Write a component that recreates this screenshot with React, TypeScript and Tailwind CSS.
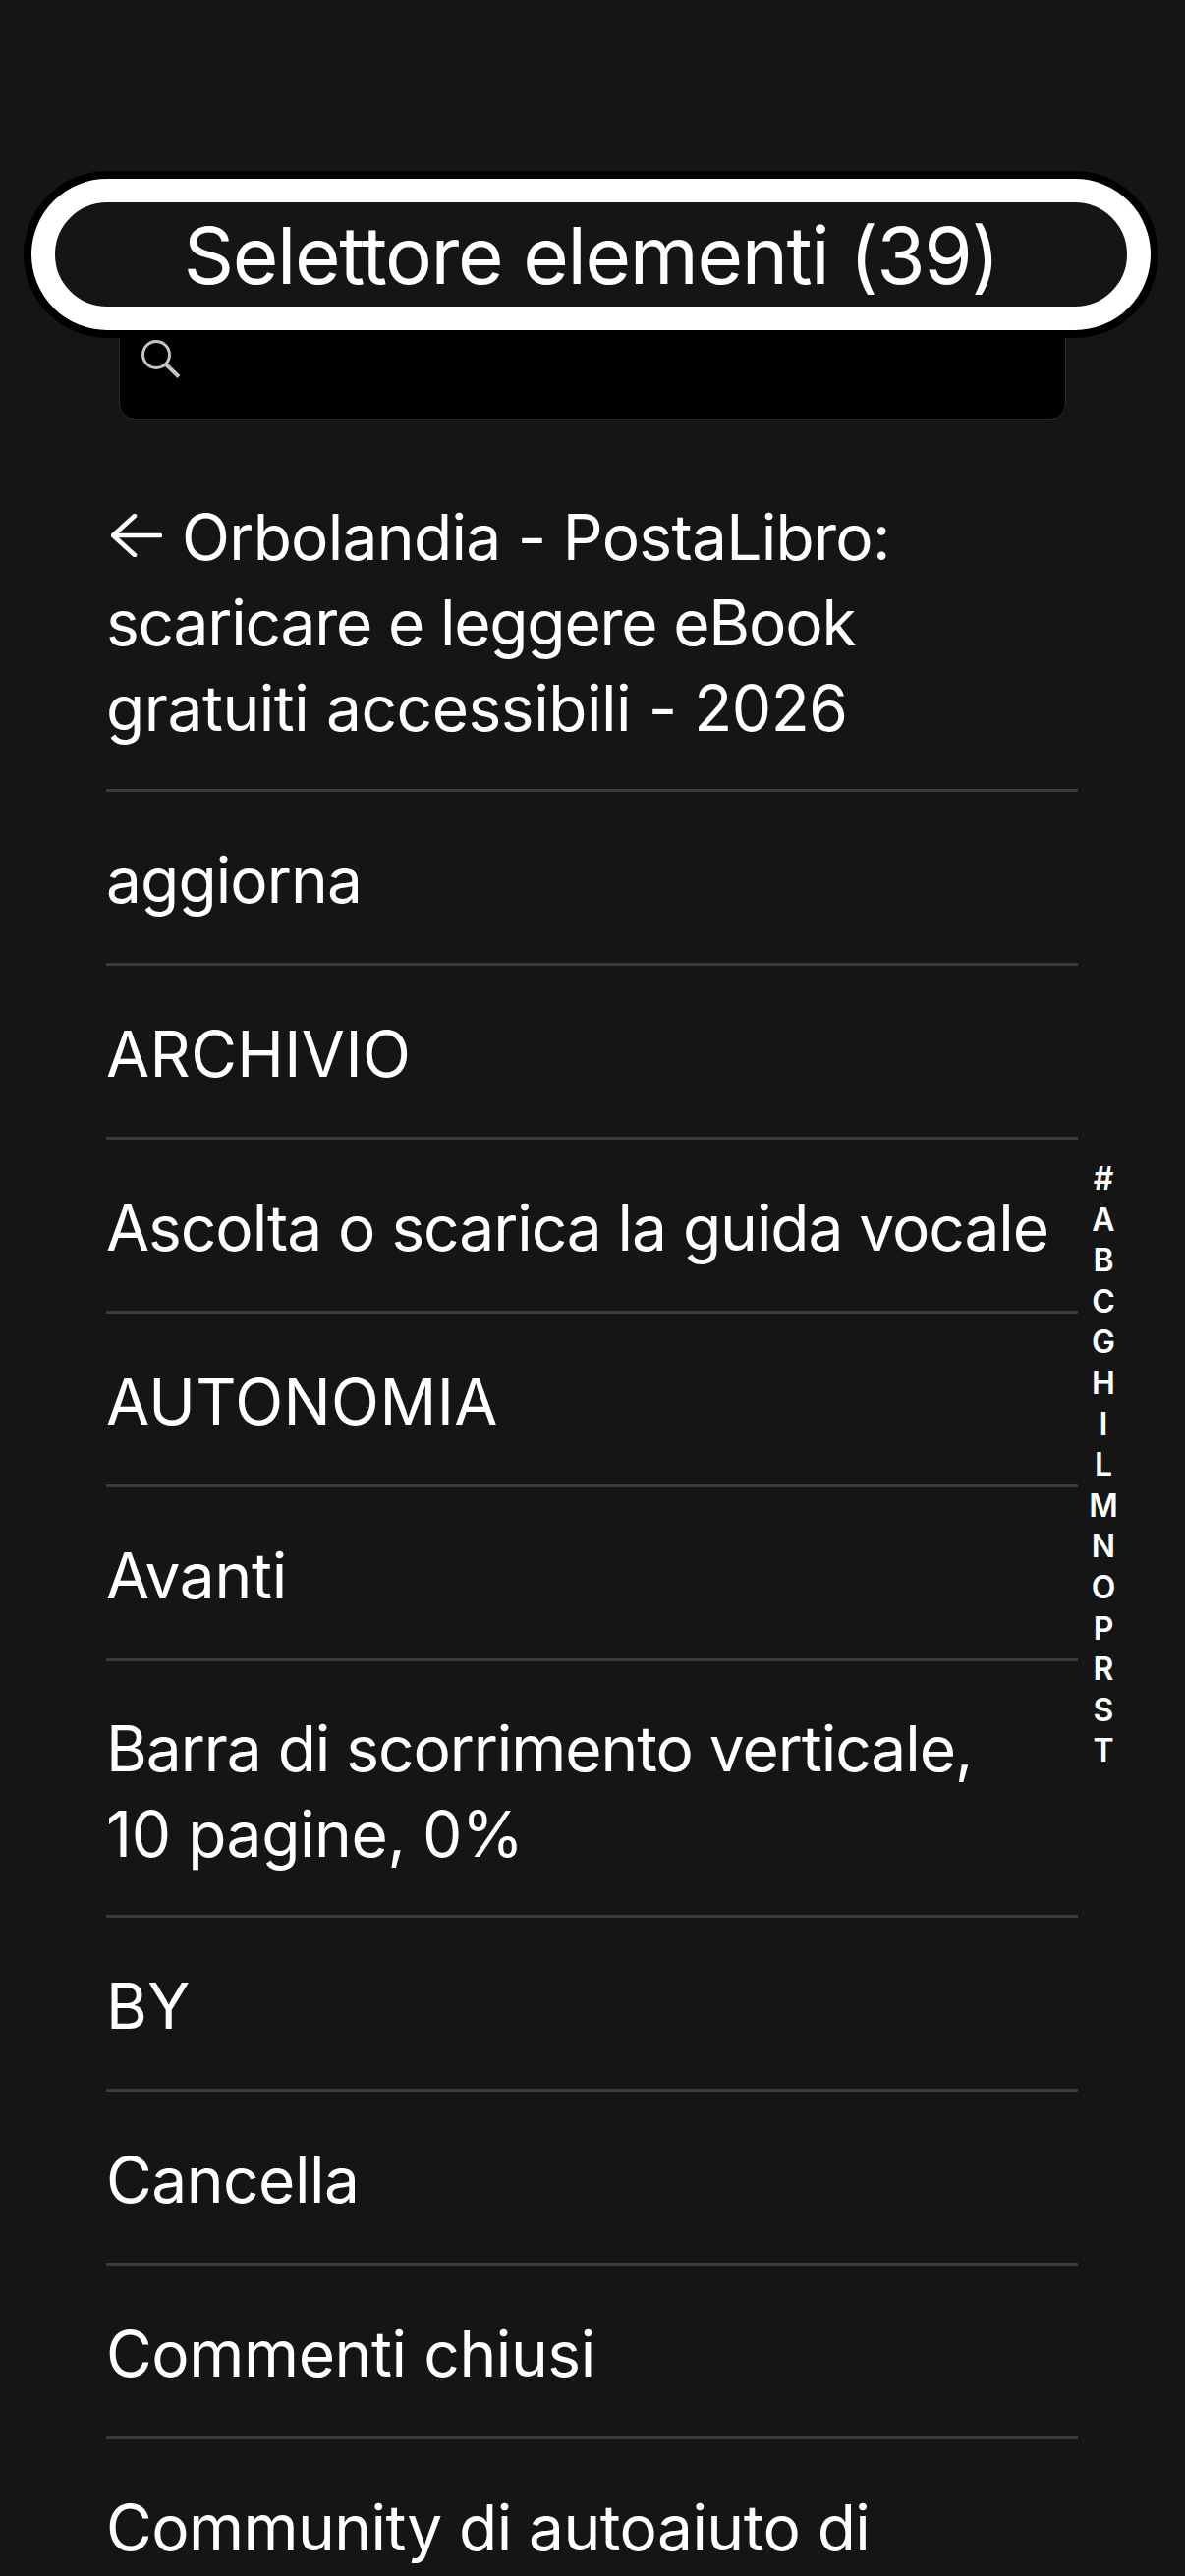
const items = [
  { label: "aggiorna", tracking: "tracking-[-0.9px]" },
  { label: "ARCHIVIO", tracking: "tracking-[0.4px]" },
  { label: "Ascolta o scarica la guida vocale", tracking: "tracking-[-1.05px]" },
  { label: "AUTONOMIA", tracking: "tracking-[0.4px]" },
  { label: "Avanti", tracking: "tracking-[-0.3px]" },
];

const moreItems = [
  { label: "BY", tracking: "tracking-[0px]" },
  { label: "Cancella", tracking: "tracking-[-0.5px]" },
  { label: "Commenti chiusi", tracking: "tracking-[-0.4px]" },
];

const letters = ["#", "A", "B", "C", "G", "H", "I", "L", "M", "N", "O", "P", "R", "S", "T"];

function Row({ children, multiline = false }: { children: React.ReactNode; multiline?: boolean }) {
  return (
    <div className={multiline ? "border-b-[3px] border-[#3a3a3a] pb-[39px] pt-[45px]" : "border-b-[3px] border-[#3a3a3a] pb-[41px] pt-[46px]"}>
      {children}
    </div>
  );
}

export default function App() {
  return (
    <div className="relative h-[2622px] overflow-hidden bg-[#151515] font-['Inter',sans-serif] text-[64px] leading-[87px] tracking-[-0.9px] text-white">
      {/* title pill sits on top of the search field */}
      <div className="absolute left-[24px] top-[174px] z-10 w-[1155px] rounded-[88px] bg-black p-[8px]">
        <div className="rounded-[84px] border-[24px] border-white bg-[#151515]">
          <div className="flex h-[106px] items-center justify-center text-[80px] tracking-[-1.4px]">
            Selettore elementi (39)
          </div>
        </div>
      </div>

      <div className="pt-[300px]">
        <div className="ml-[121px] mr-[121px] flex h-[127px] items-start rounded-[16px] border border-[#2c2c2e] bg-black pl-[22px] pt-[45px]">
          <svg width="40" height="40" viewBox="0 0 40 40" fill="none" stroke="#c4c4c4" strokeWidth="3">
            <circle cx="15" cy="15" r="13.5" />
            <path d="M25 25l13 12.500" strokeWidth="4" />
          </svg>
        </div>

        <div className="ml-[108px] mr-[109px] mt-[31px]">
          <Row multiline>
            <svg className="ml-[5px] mr-[20px] inline-block align-[3px]" width="52" height="44" viewBox="0 0 52 44" fill="none" stroke="white" strokeWidth="4.5" strokeLinecap="round" strokeLinejoin="round">
              <path d="M2 22h48M24 2L2 22l22 20" />
            </svg>
            <span className="tracking-[-0.7px]">Orbolandia - PostaLibro:</span>
            <br />
            <span className="tracking-[-1.2px]">scaricare e leggere eBook</span>
            <br />
            <span className="tracking-[-0.45px]">gratuiti accessibili - 2026</span>
          </Row>
          {items.map(item => (
            <Row key={item.label}>
              <span className={item.tracking}>{item.label}</span>
            </Row>
          ))}
          <Row multiline>
            <span className="tracking-[-1.05px]">Barra di scorrimento verticale,</span>
            <br />
            <span className="tracking-[-0.4px]">10 pagine, 0%</span>
          </Row>
          {moreItems.map(item => (
            <Row key={item.label}>
              <span className={item.tracking}>{item.label}</span>
            </Row>
          ))}
          <Row>
            <span className="tracking-[-0.55px]">Community di autoaiuto di</span>
          </Row>
        </div>
      </div>

      <div className="absolute right-[58px] top-[1179px] flex w-[50px] flex-col items-center text-[32px] font-semibold leading-[41.6px] tracking-normal">
        {letters.map(letter => (
          <span key={letter}>{letter}</span>
        ))}
      </div>
    </div>
  );
}
